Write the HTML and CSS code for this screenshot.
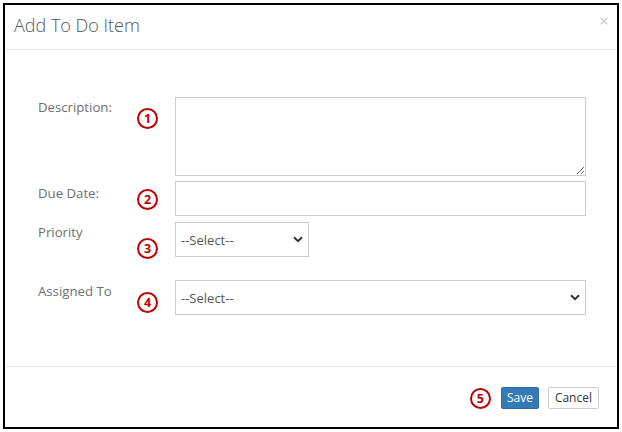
FILE: index.html
```html
<!DOCTYPE html>
<html>
<head>
<meta charset="utf-8">
<link rel="stylesheet" href="styles.css">
</head>
<body>
<div class="modal">
  <div class="modal-header">
    <h4 class="modal-title">Add To Do Item</h4>
    <span class="close">×</span>
  </div>
  <div class="modal-body">
    <div class="row row-desc">
      <label class="lbl">Description:</label>
      <span class="num">1</span>
      <textarea class="field ta"></textarea>
    </div>
    <div class="row row-date">
      <label class="lbl">Due Date:</label>
      <span class="num">2</span>
      <input class="field inp" type="text">
    </div>
    <div class="row row-prio">
      <label class="lbl">Priority</label>
      <span class="num">3</span>
      <div class="sel-wrap sel-small">
        <select class="field sel"><option>--Select--</option></select>
        <svg class="chev" width="10" height="7" viewBox="0 0 10 7"><path d="M1 1.2 L5 5.2 L9 1.2" fill="none" stroke="#333" stroke-width="2"/></svg>
      </div>
    </div>
    <div class="row row-assign">
      <label class="lbl">Assigned To</label>
      <span class="num">4</span>
      <div class="sel-wrap">
        <select class="field sel"><option>--Select--</option></select>
        <svg class="chev" width="10" height="7" viewBox="0 0 10 7"><path d="M1 1.2 L5 5.2 L9 1.2" fill="none" stroke="#333" stroke-width="2"/></svg>
      </div>
    </div>
  </div>
  <div class="modal-footer">
    <span class="num num-foot">5</span>
    <button class="btn btn-primary">Save</button>
    <button class="btn btn-default">Cancel</button>
  </div>
</div>
</body>
</html>
```
FILE: styles.css
```css
html, body {
  margin: 0;
  padding: 0;
  background: #fff;
}
body {
  padding: 3px;
  font-family: "Open Sans", "DejaVu Sans", sans-serif;
  font-size: 13px;
  color: #6f6f6f;
}
.modal {
  width: 612px;
  height: 422px;
  border: 2px solid #000;
  display: flex;
  flex-direction: column;
  background: #fff;
}
.modal-header {
  height: 44px;
  border-bottom: 1px solid #e5e5e5;
  display: flex;
  align-items: center;
  justify-content: space-between;
  padding: 0 8px 0 9px;
}
.modal-title {
  margin: 0;
  font-size: 18px;
  font-weight: 300;
  color: #555;
  line-height: 24px;
  margin-top: -4px;
}
.close {
  font-size: 17px;
  color: #c8c8c8;
  line-height: 1;
  margin-top: -14px;
}
.modal-body {
  flex: 1;
  padding: 47px 31px 0 33px;
}
.row {
  display: grid;
  grid-template-columns: 99px 38px 411px;
  align-items: start;
}
.lbl {
  color: #6f6f6f;
  line-height: 18px;
  font-size: 13.2px;
  font-weight: 400;
}
.num {
  width: 17px;
  height: 17px;
  border: 2px solid #c00000;
  border-radius: 50%;
  color: #c00000;
  font-weight: 700;
  font-size: 12.5px;
  line-height: 17px;
  text-align: center;
  font-family: "Open Sans", "DejaVu Sans", sans-serif;
}
.field {
  box-sizing: border-box;
  border: 1px solid #ccc;
  background: #fff;
  margin: 0;
  font-family: "Open Sans", "DejaVu Sans", sans-serif;
  font-size: 13px;
  color: #555;
  outline: none;
  border-radius: 0;
}
.ta {
  width: 411px;
  height: 79px;
  display: block;
}
.inp {
  width: 411px;
  height: 35px;
  display: block;
}
.sel-wrap {
  position: relative;
  width: 411px;
}
.sel-small {
  width: 134px;
}
.sel {
  -webkit-appearance: none;
  appearance: none;
  width: 100%;
  height: 35px;
  padding: 0 0 0 5px;
  display: block;
}
.chev {
  position: absolute;
  right: 6px;
  top: 14px;
}
.row-desc .lbl { margin-top: 1px; }
.row-desc .num { margin-top: 11px; }
.row-date { margin-top: 5px; }
.row-date .lbl { margin-top: 3px; }
.row-date .num { margin-top: 8px; }
.row-prio { margin-top: 6px; }
.row-prio .lbl { margin-top: 1px; }
.row-prio .num { margin-top: 16px; }
.row-assign { margin-top: 21px; }
.row-assign .lbl { margin-top: 2px; }
.row-assign .num { margin-top: 12px; }
.modal-footer {
  height: 61px;
  box-sizing: border-box;
  border-top: 1px solid #e5e5e5;
  display: flex;
  align-items: center;
  justify-content: flex-end;
  padding: 2px 18px 0 0;
}
.num-foot {
  margin-right: 10px;
}
.btn {
  height: 22px;
  font-family: "Open Sans", "DejaVu Sans", sans-serif;
  font-size: 12px;
  border-radius: 2px;
  padding: 0 6px;
  line-height: 20px;
  box-sizing: border-box;
  margin: 0;
}
.btn-primary {
  background: #337ab7;
  border: 1px solid #2e6da4;
  color: #fff;
  padding: 0 5px;
}
.btn-default {
  background: #fff;
  border: 1px solid #ccc;
  color: #333;
  margin-left: 9px;
}
```
